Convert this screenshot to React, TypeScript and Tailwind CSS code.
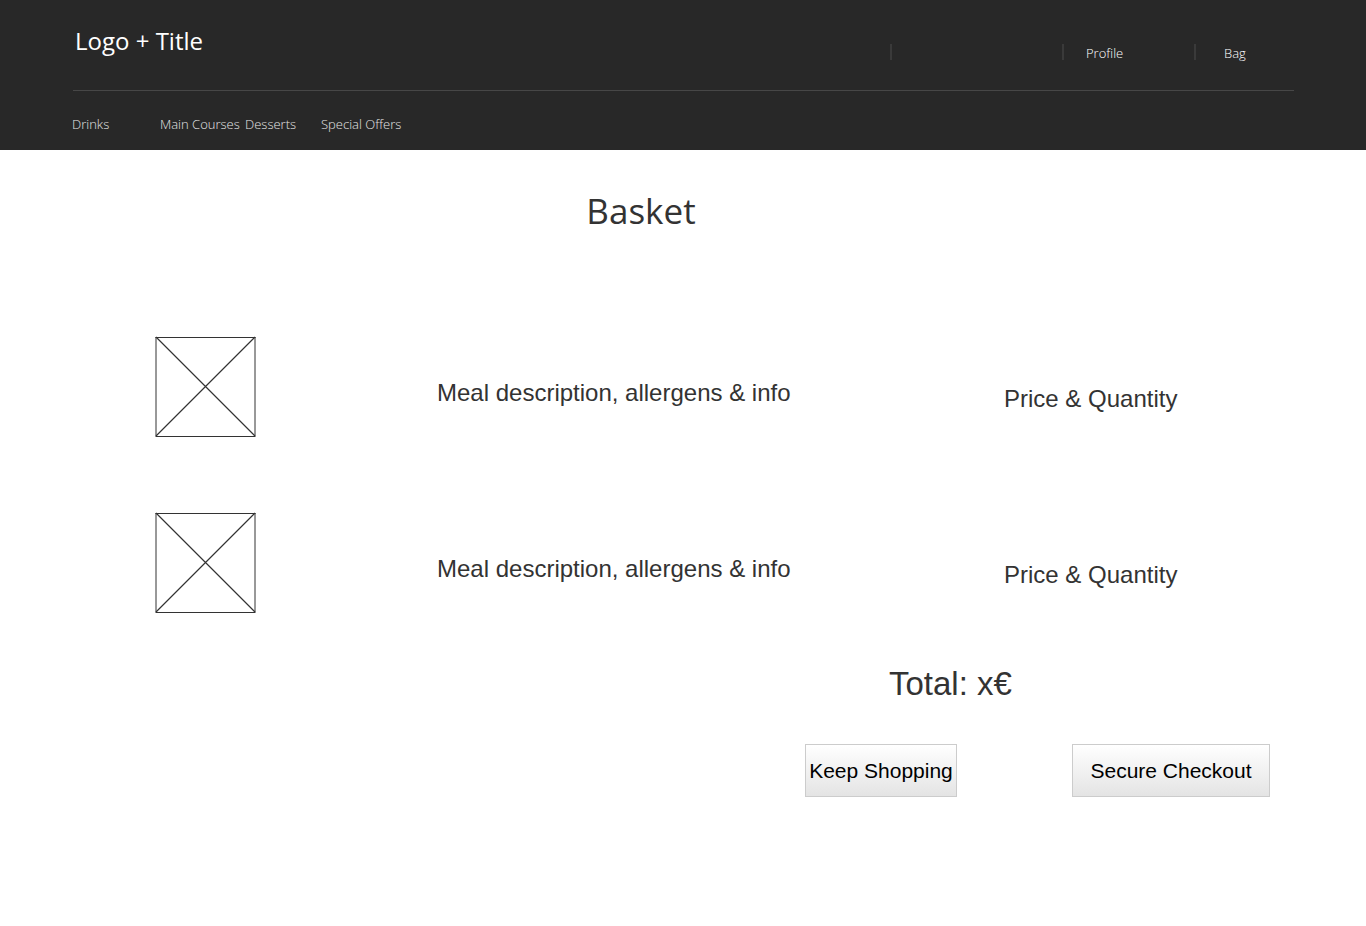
type Meal = { id: number; description: string; price: string };

const meals: Meal[] = [
  { id: 1, description: "Meal description, allergens & info", price: "Price & Quantity" },
  { id: 2, description: "Meal description, allergens & info", price: "Price & Quantity" },
];

function Placeholder() {
  return (
    <svg
      viewBox="0 0 101 101"
      className="h-[101px] w-[101px]"
      fill="none"
      stroke="#333333"
      role="img"
      aria-label="Meal picture"
    >
      <path d="M1 1V100M100 1V100" />
      <path d="M.5 1.5H100.5M.5 100.5H100.5" />
      <path d="M1 1 100 100M100 1 1 100" strokeWidth="1.2" />
    </svg>
  );
}

function Header() {
  return (
    <header className="bg-[#282828] px-[72px] font-['Open_Sans',sans-serif] text-[13px] leading-[18px] font-light text-white">
      <div className="ml-px flex h-[91px] items-start justify-between border-b border-[#474747]">
        <a href="#home" className="mt-6 ml-0.5 text-2xl leading-[34px] font-normal">
          Logo + Title
        </a>
        <ul className="mt-11 flex">
          <li className="h-4 w-[172px] border-l-2 border-[#3a3a3a]" />
          <li className="h-4 w-[132px] border-l-2 border-[#3a3a3a] pl-[22px]">
            <a href="#profile">Profile</a>
          </li>
          <li className="h-4 w-[100px] border-l-2 border-[#3a3a3a] pl-7">
            <a href="#bag">Bag</a>
          </li>
        </ul>
      </div>
      <nav className="flex h-[59px] items-center pt-1.5 text-[#e5e5e5]">
        <a href="#drinks" className="w-[88px]">Drinks</a>
        <a href="#main-courses" className="w-[85px] whitespace-nowrap">Main Courses</a>
        <a href="#desserts" className="w-[76px]">Desserts</a>
        <a href="#offers">Special Offers</a>
      </nav>
    </header>
  );
}

export default function App() {
  return (
    <div className="bg-white font-['Liberation_Sans',Arial,sans-serif] text-[#333333]">
      <Header />
      <main>
        <h1 className="mt-9 pr-[84px] text-center font-['Open_Sans',sans-serif] text-[35px] leading-[50px]">
          Basket
        </h1>
        <ul className="mt-[100px] flex flex-col gap-[75px] px-[155px] text-2xl">
          {meals.map((meal) => (
            <li key={meal.id} className="grid grid-cols-[282fr_567fr_207fr] items-center">
              <Placeholder />
              <p className="pt-3">{meal.description}</p>
              <p className="pt-6 whitespace-nowrap">{meal.price}</p>
            </li>
          ))}
        </ul>
        <section className="mt-[51px] mr-24 ml-auto w-[465px]">
          <p className="pl-[84px] text-[33px] leading-10">Total: x€</p>
          <div className="mt-10 flex justify-between text-[21px] text-black">
            <button
              type="button"
              className="h-[53px] w-[152px] border border-[#cccccc] bg-linear-to-b from-white to-[#e4e4e4] whitespace-nowrap"
            >
              Keep Shopping
            </button>
            <button
              type="button"
              className="h-[53px] w-[198px] border border-[#cccccc] bg-linear-to-b from-white to-[#e4e4e4] whitespace-nowrap"
            >
              Secure Checkout
            </button>
          </div>
        </section>
      </main>
    </div>
  );
}
